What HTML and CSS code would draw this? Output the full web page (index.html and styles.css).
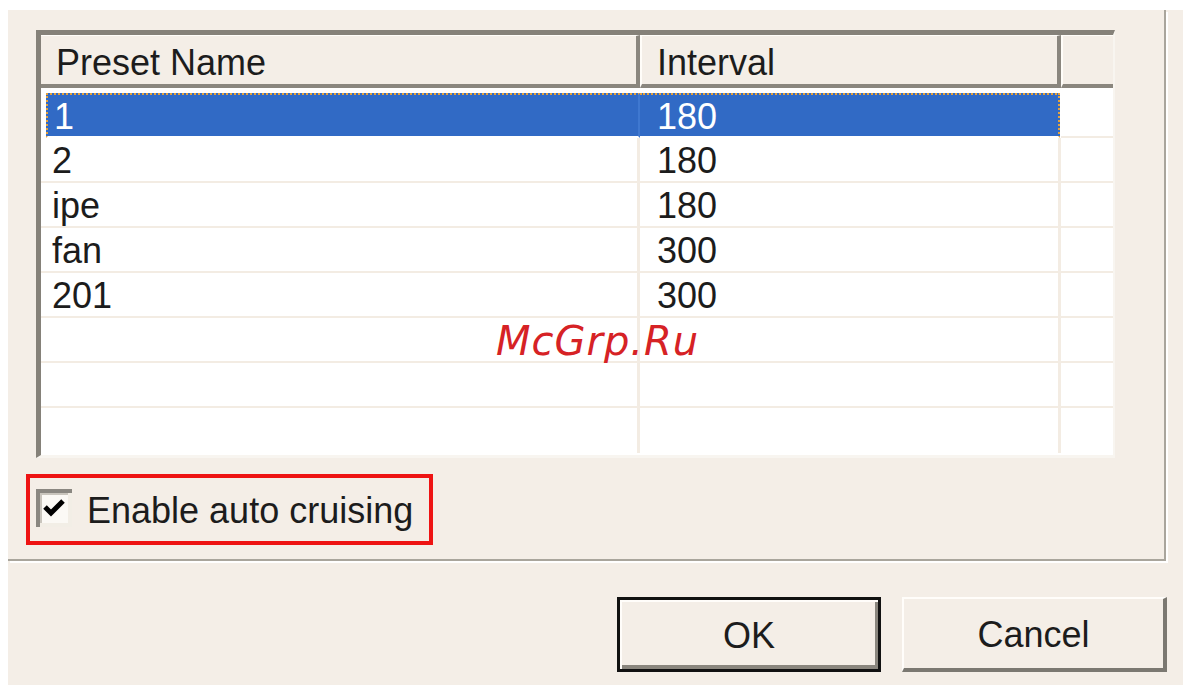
FILE: index.html
```html
<!DOCTYPE html>
<html>
<head>
<meta charset="utf-8">
<link rel="stylesheet" href="styles.css">
</head>
<body>
<div class="dialog">
  <div class="group">
    <div class="listview">
      <div class="header">
        <div class="hcell h1">Preset Name</div>
        <div class="hcell h2">Interval</div>
        <div class="hcell h3"></div>
      </div>
      <div class="body">
        <div class="row sel"><div class="c c1"><span>1</span></div><div class="c c2"><span>180</span></div><div class="c c3"></div></div>
        <div class="row"><div class="c c1"><span>2</span></div><div class="c c2"><span>180</span></div><div class="c c3"></div></div>
        <div class="row"><div class="c c1"><span>ipe</span></div><div class="c c2"><span>180</span></div><div class="c c3"></div></div>
        <div class="row"><div class="c c1"><span>fan</span></div><div class="c c2"><span>300</span></div><div class="c c3"></div></div>
        <div class="row"><div class="c c1"><span>201</span></div><div class="c c2"><span>300</span></div><div class="c c3"></div></div>
        <div class="row"><div class="c c1"></div><div class="c c2"></div><div class="c c3"></div></div>
        <div class="row"><div class="c c1"></div><div class="c c2"></div><div class="c c3"></div></div>
        <div class="row last"><div class="c c1"></div><div class="c c2"></div><div class="c c3"></div></div>
      </div>
    </div>
    <div class="checkrow">
      <svg class="checkbox" width="36" height="38" viewBox="0 0 36 38">
        <rect x="0" y="0" width="36" height="38" fill="#fbf9f5"/>
        <rect x="0" y="0" width="36" height="4" fill="#8a8781"/>
        <rect x="0" y="0" width="4" height="38" fill="#8a8781"/>
        <rect x="4" y="4" width="28" height="2" fill="#c9c5bd"/>
        <rect x="4" y="4" width="2" height="30" fill="#c9c5bd"/>
        <rect x="32" y="4" width="4" height="34" fill="#f2eee6"/>
        <rect x="4" y="34" width="32" height="4" fill="#f2eee6"/>
        <path d="M9 18 L15 24 L27 12" fill="none" stroke="#000" stroke-width="5" stroke-linejoin="miter" stroke-linecap="butt"/>
      </svg>
      <span class="label">Enable auto cruising</span>
    </div>
  </div>
  <div class="buttons">
    <div class="btn default"><span>OK</span></div>
    <div class="btn"><span>Cancel</span></div>
  </div>
  <div class="watermark">McGrp.Ru</div>
</div>
</body>
</html>
```

FILE: styles.css
```css
html, body {
  margin: 0;
  padding: 0;
  background: #ffffff;
}

body {
  font-family: "Liberation Sans", Arial, sans-serif;
  font-size: 36px;
  color: #1c1c1c;
}

.dialog {
  position: relative;
  margin: 10px 0 0 8px;
  width: 1175px;
  height: 675px;
  background: #f4eee7;
  display: flex;
  flex-direction: column;
}

.group {
  box-sizing: border-box;
  width: 1158px;
  height: 551px;
  padding: 20px 0 0 18px;
  border-right: 2px solid #a9a59c;
  border-bottom: 2px solid #a9a59c;
  box-shadow: 2px 2px 0 #ffffff;
  display: flex;
  flex-direction: column;
}

.listview {
  box-sizing: border-box;
  margin-left: 10px;
  width: 1079px;
  height: 428px;
  background: #ffffff;
  border-top: 5px solid #858179;
  border-left: 5px solid #858179;
  border-right: 2px solid #f8f5f0;
  border-bottom: 3px solid #f8f5f0;
  display: flex;
  flex-direction: column;
  overflow: hidden;
}

.header {
  display: grid;
  grid-template-columns: 599px 421px 1fr;
  height: 53px;
  flex: none;
}

.hcell {
  box-sizing: border-box;
  background: #f4eee7;
  border-top: 1px solid #fffdf9;
  border-left: 2px solid #fffdf9;
  border-right: 4px solid #8a867e;
  border-bottom: 4px solid #8a867e;
  display: flex;
  align-items: center;
  line-height: 1;
  padding-top: 5px;
}

.h1 { padding-left: 15px; border-left: 0; }
.h2 { padding-left: 15px; }
.h3 { border-right: 0; }

.body {
  padding-top: 5px;
  display: flex;
  flex-direction: column;
}

.row {
  display: grid;
  grid-template-columns: 599px 421px 1fr;
  height: 45px;
}

.c {
  box-sizing: border-box;
  border-bottom: 2px solid #f3ece3;
  display: flex;
  align-items: center;
  line-height: 1;
  padding-top: 3px;
}

.c1 {
  padding-left: 11px;
  border-right: 3px solid #f3ece3;
}

.c2 {
  padding-left: 17px;
  border-right: 3px solid #f3ece3;
}

.row.last .c { border-bottom: 0; }

.row.sel .c1,
.row.sel .c2 {
  color: #ffffff;
  border-bottom: 2px solid #ffffff;
  border-top: 2px dotted #e6a23a;
  background: #316ac5;
}

.row.sel .c1 {
  border-right: 2px solid #3f78d0;
  margin-left: 5px;
  padding-left: 6px;
  border-left: 2px dotted #e6a23a;
}

.row.sel .c2 {
  border-right: 2px dotted #e6a23a;
  margin-right: 1px;
}

.checkrow {
  box-sizing: border-box;
  margin-top: 16px;
  width: 407px;
  height: 71px;
  border: 4px solid #ee1313;
  padding: 11px 0 0 6px;
  display: flex;
  align-items: flex-start;
  gap: 15px;
}

.checkbox {
  flex: none;
  display: block;
}

.label {
  line-height: 1;
  padding-top: 4px;
}

.buttons {
  display: flex;
  justify-content: flex-end;
  gap: 21px;
  margin-top: 36px;
  padding-right: 16px;
}

.btn {
  box-sizing: border-box;
  width: 265px;
  height: 75px;
  display: flex;
  align-items: center;
  justify-content: center;
  background: #f4eee7;
  border-top: 2px solid #fffdfa;
  border-left: 2px solid #fffdfa;
  border-right: 4px solid #7b7871;
  border-bottom: 4px solid #7b7871;
  line-height: 1;
  padding-top: 2px;
}

.btn.default {
  width: 264px;
  border: 3px solid #111;
  box-shadow: inset 2px 2px 0 #fffdfa, inset -3px -4px 0 #8a867e;
}

.watermark {
  position: absolute;
  left: 488px;
  top: 311px;
  font-family: "DejaVu Sans", sans-serif;
  font-style: italic;
  font-size: 40px;
  letter-spacing: 1px;
  color: #d62225;
  line-height: 1;
}
```
